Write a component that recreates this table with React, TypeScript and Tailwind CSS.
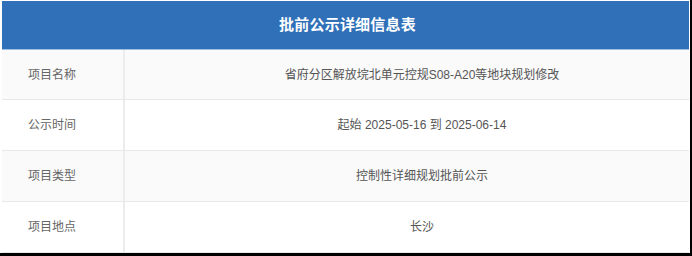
const rows = [
  { label: '项目名称', value: '省府分区解放垸北单元控规S08-A20等地块规划修改', shaded: true },
  { label: '公示时间', value: '起始 2025-05-16 到 2025-06-14', shaded: false },
  { label: '项目类型', value: '控制性详细规划批前公示', shaded: true },
  { label: '项目地点', value: '长沙', shaded: false },
];

export default function App() {
  return (
    <div
      className="w-[692px] h-[256px] bg-white border-r-2 border-b-[3px] border-black overflow-hidden"
      style={{ fontFamily: '"Liberation Sans", "Noto Sans CJK SC", sans-serif' }}
    >
      <div className="ml-[2px] mr-[1px] pt-[1px] flex flex-col">
        {/* Title bar */}
        <div className="h-[49px] bg-[#2f70b8] border-b border-[#9fc0e3] flex items-center justify-center">
          <span className="text-white font-bold text-[15px] tracking-[0.2px] pl-[4px]">批前公示详细信息表</span>
        </div>

        {rows.map((row, i) => (
          <div
            key={row.label}
            className={`flex border-b border-[#e8e8e8] ${i === 0 ? 'h-[50px]' : 'h-[51px]'} ${
              row.shaded ? 'bg-[#fafafa]' : 'bg-white'
            }`}
          >
            <div className="w-[123px] shrink-0 border-r-2 border-[#ececec] flex items-center pl-[26px] text-[12px] text-[#666]">
              {row.label}
            </div>
            <div className="flex-1 flex items-center justify-center pl-[30px] text-[12px] text-[#555]">
              {row.value}
            </div>
          </div>
        ))}
      </div>
    </div>
  );
}
